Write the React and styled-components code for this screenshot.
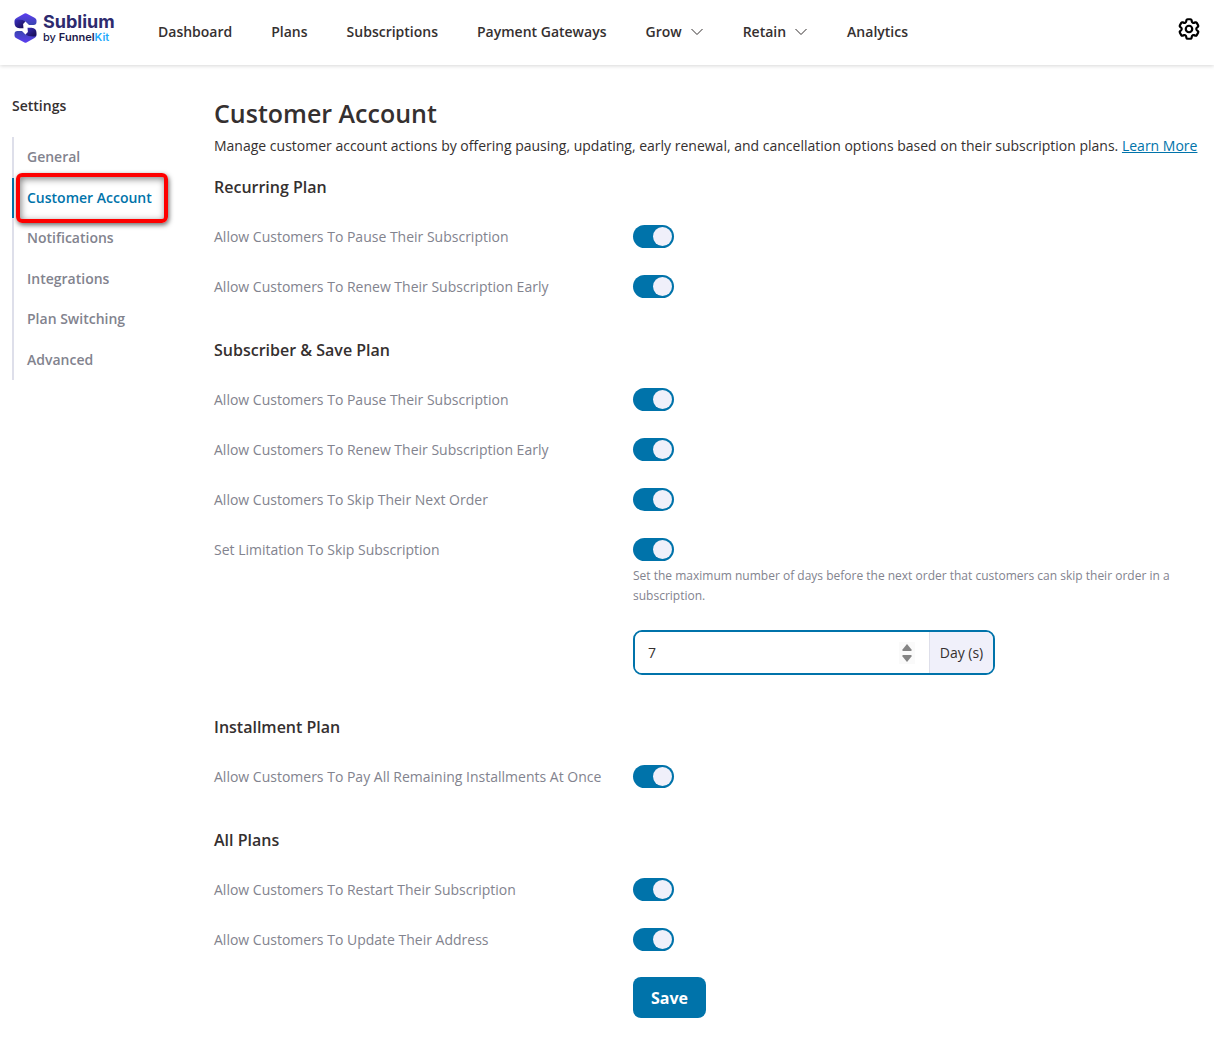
import React, {useState} from 'react'
import styled, {createGlobalStyle, css} from 'styled-components'
import {HiOutlineCog6Tooth} from 'react-icons/hi2'

const GlobalStyle = createGlobalStyle`
    *, *::before, *::after {
        box-sizing: border-box;
    }

    body {
        margin: 0;
        background: #fff;
        color: #353030;
        font-family: "Open Sans", "Noto Sans", sans-serif;
        font-size: 14px;
        line-height: 20px;
    }

    button, input {
        font: inherit;
        color: inherit;
    }
`

const Header = styled.header`
    display: flex;
    align-items: center;
    height: 65px;
    padding: 0 12px 0 14px;
    background: #fff;
    box-shadow: 0 1px 4px rgba(0, 0, 0, 0.16);
`

const Brand = styled.a`
    display: flex;
    align-items: center;
    gap: 6px;
    width: 144px;
    margin-bottom: 10px;
    color: #2d2a6e;
    font-family: Inter, "Liberation Sans", sans-serif;
    text-decoration: none;
`

const BrandText = styled.span`
    display: flex;
    flex-direction: column;
`

const BrandName = styled.span`
    font-size: 18px;
    font-weight: 700;
    line-height: 19px;
`

const BrandOwner = styled.span`
    color: #1b1a4b;
    font-size: 11px;
    font-weight: 500;
    line-height: 13px;

    b {
        font-weight: 600;
    }

    i {
        color: #1daafc;
        font-style: normal;
    }
`

const Nav = styled.nav`
    display: flex;
    flex: 1;
    gap: 39px;
    margin-bottom: 2px;
`

const NavLink = styled.a`
    display: flex;
    align-items: center;
    gap: 8px;
    color: #353030;
    font-weight: 600;
    text-decoration: none;
`

const IconButton = styled.button`
    display: flex;
    margin-bottom: 8px;
    padding: 0;
    border: 0;
    background: none;
    color: #000;
    cursor: pointer;

    svg {
        stroke-width: 2;
    }
`

const Page = styled.div`
    display: grid;
    grid-template-columns: 202px 1fr;
    padding: 31px 12px 24px;
`

const SidebarTitle = styled.div`
    margin-bottom: 21px;
    font-weight: 600;
`

const Menu = styled.ul`
    display: grid;
    grid-auto-rows: 1fr;
    min-height: 243px;
    margin: 0;
    padding: 0;
    list-style: none;
`

const MenuItem = styled.li`
    position: relative;
    display: flex;
    align-items: center;
    padding-left: 13px;
    border-left: 2px solid ${props => props.$active ? '#0073aa' : '#dedfea'};

    a {
        color: ${props => props.$active ? '#0073aa' : '#82838e'};
        font-weight: 600;
        text-decoration: none;
    }

    ${props => props.$active && css`
        &::after {
            content: "";
            position: absolute;
            top: -5px;
            left: 2px;
            width: 152px;
            height: 50px;
            border: 4px solid #fe0000;
            border-radius: 6px;
            box-shadow: 1px 2px 5px rgba(0, 0, 0, 0.6), inset 1px 2px 7px rgba(0, 0, 0, 0.5);
            pointer-events: none;
        }
    `}
`

const Title = styled.h1`
    margin: 0 0 6px;
    font-size: 25px;
    font-weight: 600;
    line-height: 34px;
`

const Intro = styled.p`
    margin: 0;

    a {
        color: #0073aa;
    }
`

const Section = styled.section`
    display: flex;
    flex-direction: column;
    gap: 27px;
    padding-top: ${props => props.$first ? 20 : 41}px;
`

const SectionTitle = styled.h2`
    margin: 0;
    font-size: 16px;
    font-weight: 600;
    line-height: 22px;
`

const Row = styled.div`
    display: grid;
    grid-template-columns: 419px 1fr;
    line-height: 23px;

    label {
        color: #82838e;
    }
`

const Toggle = styled.input`
    display: block;
    width: 41px;
    height: 23px;
    margin: 0;
    padding: 2px;
    border-radius: 12px;
    background: #c5c7d3;
    appearance: none;
    cursor: pointer;

    &::before {
        content: "";
        display: block;
        width: 19px;
        height: 19px;
        border-radius: 50%;
        background: #f0f0fa;
    }

    &:checked {
        background: #0073aa;
    }

    &:checked::before {
        margin-left: auto;
    }
`

const Hint = styled.p`
    margin: 5px 0 24px;
    color: #82838e;
    font-size: 12px;
    line-height: 20px;
`

const NumberBox = styled.div`
    display: flex;
    align-items: stretch;
    max-width: 362px;
    height: 45px;
    overflow: hidden;
    border: 2px solid #0073aa;
    border-radius: 9px;
`

const NumberInput = styled.input`
    flex: 1;
    min-width: 0;
    padding: 0 13px;
    border: 0;
    outline: 0;
    appearance: textfield;
    background: #fff;

    &::-webkit-inner-spin-button {
        display: none;
    }
`

const Stepper = styled.div`
    display: flex;
    flex-direction: column;
    align-self: center;
    margin-right: 14px;
    background: #fafafa;
`

const StepButton = styled.button`
    display: flex;
    align-items: center;
    justify-content: center;
    width: 16px;
    height: 11px;
    padding: 0;
    border: 0;
    background: none;
    color: #858585;
`

const Suffix = styled.span`
    display: flex;
    align-items: center;
    justify-content: center;
    width: 64px;
    border-left: 1px solid #dedfea;
    background: #f0f0fa;
`

const Actions = styled.div`
    padding: 26px 0 0 419px;
`

const SaveButton = styled.button`
    height: 41px;
    padding: 0 18px;
    border: 0;
    border-radius: 8px;
    background: #0073aa;
    color: #fff;
    font-size: 16px;
    font-weight: 700;
    cursor: pointer;
`

const navItems = [
    {name: 'Dashboard'},
    {name: 'Plans'},
    {name: 'Subscriptions'},
    {name: 'Payment Gateways'},
    {name: 'Grow', more: true},
    {name: 'Retain', more: true},
    {name: 'Analytics'},
]

const menuItems = ['General', 'Customer Account', 'Notifications', 'Integrations', 'Plan Switching', 'Advanced']

function Logo() {
    return (
        <svg width="23" height="30" viewBox="0 0 22 30" aria-hidden="true">
            <defs>
                <linearGradient id="band" x1="0" y1="0" x2="0" y2="1">
                    <stop offset="0" stopColor="#5b3df0"/>
                    <stop offset="1" stopColor="#3a45b0"/>
                </linearGradient>
                <linearGradient id="bandLow" x1="0" y1="0" x2="0" y2="1">
                    <stop offset="0" stopColor="#3a45b0"/>
                    <stop offset="1" stopColor="#5b3df0"/>
                </linearGradient>
                <linearGradient id="fold" x1="0" y1="0" x2="1" y2="1">
                    <stop offset="0" stopColor="#3a2fc0"/>
                    <stop offset="1" stopColor="#150a4a"/>
                </linearGradient>
            </defs>
            <path fill="url(#band)" d="M0 8Q0 6 2 5L10 .6Q11 0 12 .6L20.500 5Q22 6 22 7.500V9Q22 12 19 12H14.500L11 8.500Z"/>
            <path fill="url(#fold)" d="M0 8Q1 6.500 3 6.500L8 7L11 8.500L8.600 11L9 15.200H5Q0 15 0 10Z"/>
            <path fill="url(#bandLow)" d="M22 22Q22 24 20 25L12 29.400Q11 30 10 29.400L1.500 25Q0 24 0 22.500V21Q0 18 3 18H7.500L11 21.500Z"/>
            <path fill="url(#fold)" d="M22 22Q21 23.500 19 23.500L14 23L11 21.500L13.400 19L13 14.800H17Q22 15 22 20Z"/>
        </svg>
    )
}

function Chevron() {
    return (
        <svg width="14" height="8" viewBox="0 0 14 8" fill="none" stroke="currentColor" aria-hidden="true">
            <path d="M1.5 1L7 6.5L12.5 1"/>
        </svg>
    )
}

function Setting({id, label, children}) {
    return (
        <Row>
            <label htmlFor={id}>{label}</label>
            <div>
                <Toggle id={id} type="checkbox" role="switch" defaultChecked/>
                {children}
            </div>
        </Row>
    )
}

function DayLimit() {
    const [days, setDays] = useState(7)

    return (
        <NumberBox>
            <NumberInput type="number" aria-label="Days" value={days} onChange={e => setDays(Number(e.target.value))}/>
            <Stepper>
                <StepButton type="button" aria-label="Increase" onClick={() => setDays(days + 1)}>
                    <svg width="10" height="7" viewBox="0 0 10 7" fill="currentColor"><path d="M5 0L9.5 5.5V7H.5V5.5Z"/></svg>
                </StepButton>
                <StepButton type="button" aria-label="Decrease" onClick={() => setDays(days - 1)}>
                    <svg width="10" height="7" viewBox="0 0 10 7" fill="currentColor"><path d="M5 7L9.5 1.5V0H.5V1.5Z"/></svg>
                </StepButton>
            </Stepper>
            <Suffix>Day (s)</Suffix>
        </NumberBox>
    )
}

function App() {
    return (
        <>
            <GlobalStyle/>
            <Header>
                <Brand href="#">
                    <Logo/>
                    <BrandText>
                        <BrandName>Sublium</BrandName>
                        <BrandOwner>by <b>Funnel<i>Kit</i></b></BrandOwner>
                    </BrandText>
                </Brand>
                <Nav>
                    {navItems.map(({name, more}) => <NavLink key={name} href="#">{name}{more && <Chevron/>}</NavLink>)}
                </Nav>
                <IconButton type="button" aria-label="Settings"><HiOutlineCog6Tooth size={26}/></IconButton>
            </Header>
            <Page>
                <aside>
                    <SidebarTitle>Settings</SidebarTitle>
                    <Menu>
                        {menuItems.map(name => (
                            <MenuItem key={name} $active={name === 'Customer Account'}><a href="#">{name}</a></MenuItem>
                        ))}
                    </Menu>
                </aside>
                <main>
                    <Title>Customer Account</Title>
                    <Intro>
                        Manage customer account actions by offering pausing, updating, early renewal, and cancellation options based on their subscription plans. <a href="#">Learn More</a>
                    </Intro>
                    <Section $first>
                        <SectionTitle>Recurring Plan</SectionTitle>
                        <Setting id="recurring-pause" label="Allow Customers To Pause Their Subscription"/>
                        <Setting id="recurring-renew" label="Allow Customers To Renew Their Subscription Early"/>
                    </Section>
                    <Section>
                        <SectionTitle>Subscriber &amp; Save Plan</SectionTitle>
                        <Setting id="save-pause" label="Allow Customers To Pause Their Subscription"/>
                        <Setting id="save-renew" label="Allow Customers To Renew Their Subscription Early"/>
                        <Setting id="save-skip" label="Allow Customers To Skip Their Next Order"/>
                        <Setting id="save-limit" label="Set Limitation To Skip Subscription">
                            <Hint>Set the maximum number of days before the next order that customers can skip their order in a subscription.</Hint>
                            <DayLimit/>
                        </Setting>
                    </Section>
                    <Section>
                        <SectionTitle>Installment Plan</SectionTitle>
                        <Setting id="installment-pay" label="Allow Customers To Pay All Remaining Installments At Once"/>
                    </Section>
                    <Section>
                        <SectionTitle>All Plans</SectionTitle>
                        <Setting id="all-restart" label="Allow Customers To Restart Their Subscription"/>
                        <Setting id="all-address" label="Allow Customers To Update Their Address"/>
                    </Section>
                    <Actions>
                        <SaveButton type="button">Save</SaveButton>
                    </Actions>
                </main>
            </Page>
        </>
    )
}

export default App
